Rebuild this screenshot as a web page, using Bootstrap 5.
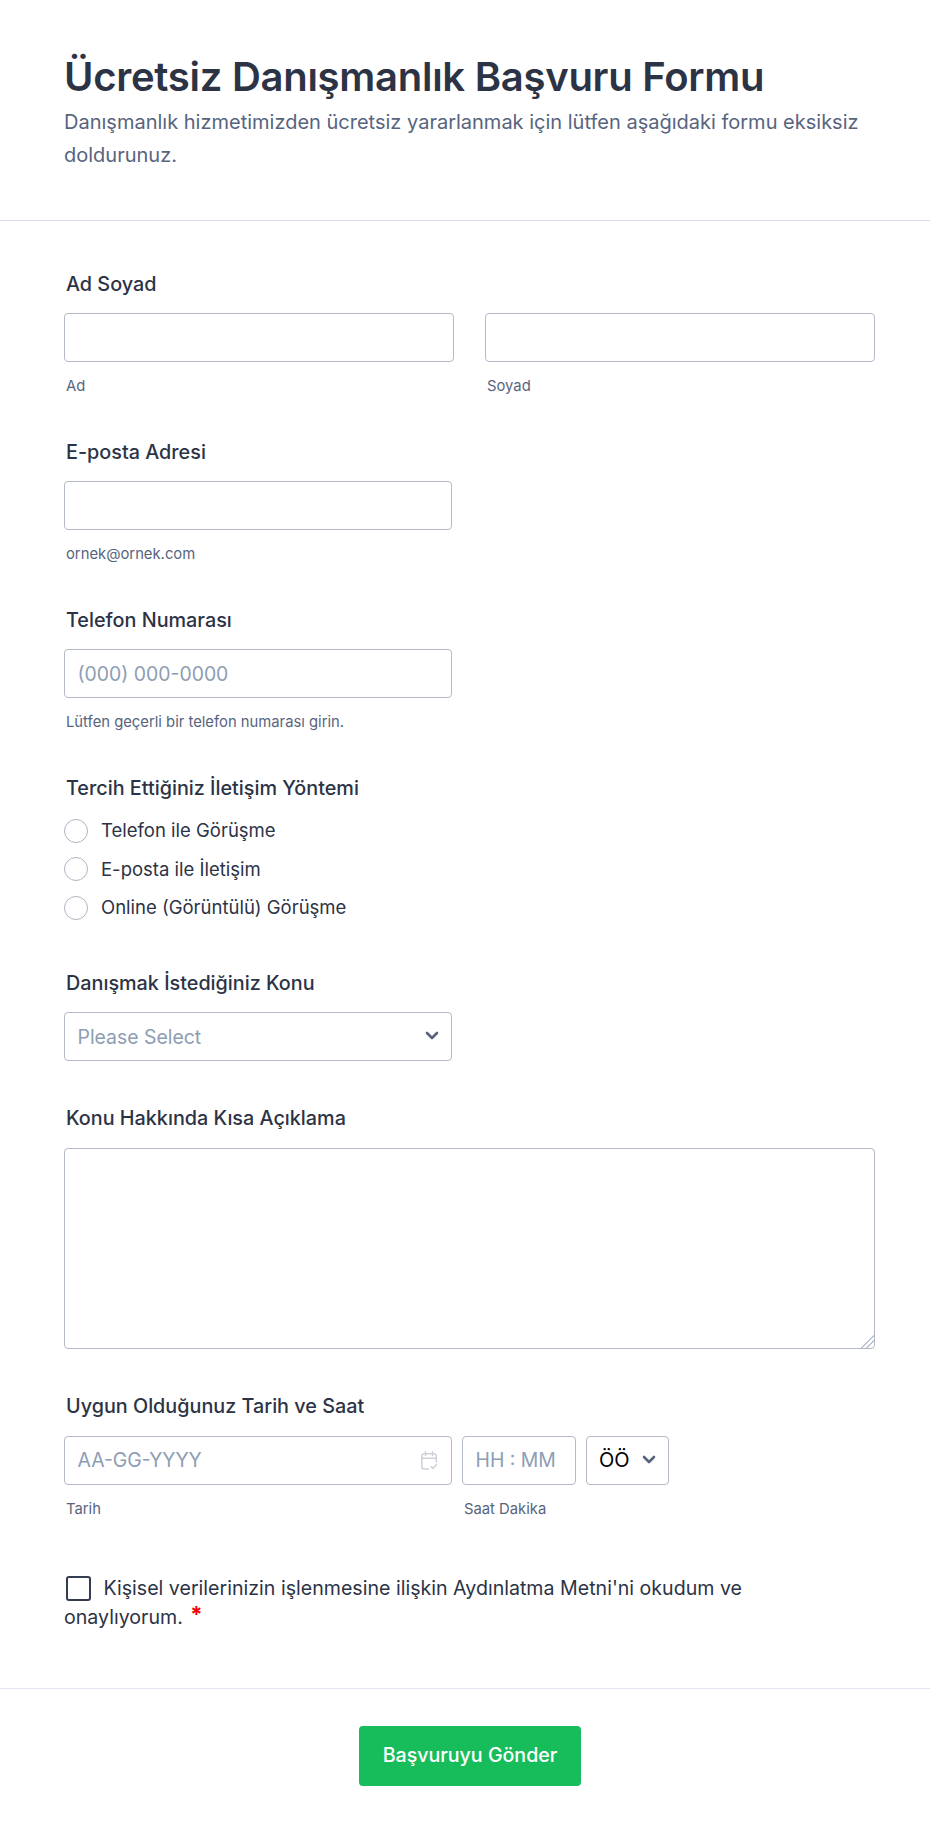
<!DOCTYPE html>
<html lang="tr">
<head>
  <meta charset="UTF-8">
  <meta name="viewport" content="width=device-width, initial-scale=1.0">
  <title>Ücretsiz Danışmanlık Başvuru Formu</title>
  <link href="https://cdn.jsdelivr.net/npm/bootstrap@5.3.3/dist/css/bootstrap.min.css" rel="stylesheet">
  <style>
    body { font-family: Inter, "Noto Sans", sans-serif; color: #2c3345; background: #fff; }
    .form-head { padding: 49px 55px 0 64px; height: 221px; border-bottom: 1px solid #d8dae9; }
    .form-head h1 { font-size: 40px; font-weight: 600; line-height: 56px; margin: 0 0 1px; color: #2c3345; letter-spacing: -.27px; }
    .form-head p { font-size: 20px; line-height: 33px; margin: 0; color: #57647e; }
    .form-body { padding: 47px 55px 0 64px; }
    .field { margin-bottom: 40px; }
    .field-select { margin-bottom: 41px; }
    .field-text { margin-bottom: 41px; }
    .field-label { font-size: 19.8px; font-weight: 500; line-height: 32px; margin: 0 0 13px 2px; color: #2c3345; }
    .label-wide { margin-bottom: 14px; }
    .hint { font-size: 14.8px; line-height: 20px; color: #57647e; margin: 14px 0 0 2px; }
    .form-control, .form-select { height: 49px; border: 1px solid #b4b9c7; border-radius: 4px; font-size: 19.4px; color: #2c3345; box-shadow: none; }
    .form-control { padding: 0 12.5px; }
    .form-control::placeholder { color: #8d9db3; opacity: 1; }
    .half-w { width: 388px; }
    .name-row { display: grid; grid-template-columns: 390px 390px; column-gap: 31px; }
    .radio-row { display: flex; align-items: center; height: 38.3px; font-size: 18.5px; color: #2c3345; }
    .radio-row .form-check-input { width: 24px; height: 24px; margin: 0 13px 0 0; border: 1px solid #aeb4c2; }
    .subject-select { color: #8d9db3; padding: 2px 12.5px 0; background-image: none; }
    .select-wrap { position: relative; }
    .chev { position: absolute; right: 13px; top: 24px; width: 14px; height: 9px; margin-top: -5px; pointer-events: none; }
    textarea.form-control { height: 201px; resize: vertical; }
    textarea.form-control::-webkit-resizer { background: linear-gradient(135deg, transparent 55%, #bcc3d2 55%, #bcc3d2 62%, transparent 62%, transparent 72%, #bcc3d2 72%, #bcc3d2 79%, transparent 79%); }
    .date-row { display: flex; gap: 10px; align-items: flex-start; }
    .date-box { width: 388px; }
    .time-box { width: 114px; }
    .ampm-box { width: 83px; }
    .ampm-box .form-select { padding: 0 12px; color: #000; background-image: none; width: 83px; font-size: 20px; }
    .cal-icon { position: absolute; right: 13px; top: 15px; width: 19px; height: 19px; pointer-events: none; }
    .consent { font-size: 19.6px; line-height: 29px; color: #2c3345; margin-top: 55.5px; }
    .consent .form-check-input { float: none; display: inline-block; width: 25px; height: 25px; margin: 0 7px 0 2px; vertical-align: -6px; border: 2px solid #343c4f; border-radius: 3px; }
    .req { color: #f80000; font-weight: 700; margin-left: 2px; font-size: 22px; line-height: 1; vertical-align: 2px; }
    .form-foot { margin-top: 55.5px; padding: 37px 0 0 10px; border-top: 1px solid #e3e5f0; display: flex; justify-content: center; height: 147px; width: 930px; }
    .send-btn { width: 222px; height: 60px; background: #18bd5b; border: 0; color: #fff; font-size: 19.6px; font-weight: 500; border-radius: 4px; }
    .send-btn:hover { background: #18bd5b; color: #fff; }
  </style>
</head>
<body>
  <form>
    <div class="form-head">
      <h1>Ücretsiz Danışmanlık Başvuru Formu</h1>
      <p>Danışmanlık hizmetimizden ücretsiz yararlanmak için lütfen aşağıdaki formu eksiksiz doldurunuz.</p>
    </div>

    <div class="form-body">
      <div class="field">
        <div class="field-label">Ad Soyad</div>
        <div class="name-row">
          <div><input class="form-control" type="text" aria-label="Ad"><div class="hint">Ad</div></div>
          <div><input class="form-control" type="text" aria-label="Soyad"><div class="hint">Soyad</div></div>
        </div>
      </div>

      <div class="field">
        <div class="field-label">E-posta Adresi</div>
        <input class="form-control half-w" type="email" aria-label="E-posta Adresi">
        <div class="hint">ornek@ornek.com</div>
      </div>

      <div class="field">
        <div class="field-label">Telefon Numarası</div>
        <input class="form-control half-w" type="tel" placeholder="(000) 000-0000" aria-label="Telefon Numarası">
        <div class="hint">Lütfen geçerli bir telefon numarası girin.</div>
      </div>

      <div class="field">
        <div class="field-label mb-2">Tercih Ettiğiniz İletişim Yöntemi</div>
        <label class="radio-row"><input class="form-check-input" type="radio" name="yontem">Telefon ile Görüşme</label>
        <label class="radio-row"><input class="form-check-input" type="radio" name="yontem">E-posta ile İletişim</label>
        <label class="radio-row"><input class="form-check-input" type="radio" name="yontem">Online (Görüntülü) Görüşme</label>
      </div>

      <div class="field-select">
        <div class="field-label">Danışmak İstediğiniz Konu</div>
        <div class="select-wrap half-w">
          <select class="form-select subject-select" aria-label="Danışmak İstediğiniz Konu"><option>Please Select</option></select>
          <svg class="chev" viewBox="0 0 14 9"><path d="M2 2l5 5 5-5" fill="none" stroke="#57647e" stroke-width="2.6" stroke-linecap="round" stroke-linejoin="round"/></svg>
        </div>
      </div>

      <div class="field-text">
        <div class="field-label label-wide">Konu Hakkında Kısa Açıklama</div>
        <textarea class="form-control" aria-label="Konu Hakkında Kısa Açıklama"></textarea>
      </div>

      <div class="field-label label-wide">Uygun Olduğunuz Tarih ve Saat</div>
      <div class="date-row">
        <div class="date-box">
          <div class="select-wrap">
            <input class="form-control" type="text" placeholder="AA-GG-YYYY" aria-label="Tarih">
            <svg class="cal-icon" viewBox="0 0 19 19" fill="none" stroke="#cdd1da" stroke-width="1.5" stroke-linecap="round" stroke-linejoin="round"><path d="M8.5 18H4a2.2 2.2 0 0 1-2.2-2.2V5A2.2 2.2 0 0 1 4 2.8h10A2.2 2.2 0 0 1 16.2 5v6"/><path d="M1.8 7.3h14.4M5.5.8v3.6M12.5.8v3.6"/><path d="M11 15.5l2 2 3.5-4"/></svg>
          </div>
          <div class="hint">Tarih</div>
        </div>
        <div class="time-box">
          <input class="form-control" type="text" placeholder="HH : MM" aria-label="Saat Dakika">
          <div class="hint text-nowrap">Saat Dakika</div>
        </div>
        <div class="ampm-box select-wrap">
          <select class="form-select" aria-label="ÖÖ"><option>ÖÖ</option></select>
          <svg class="chev" viewBox="0 0 14 9"><path d="M2 2l5 5 5-5" fill="none" stroke="#57647e" stroke-width="2.6" stroke-linecap="round" stroke-linejoin="round"/></svg>
        </div>
      </div>

      <div class="consent">
        <input class="form-check-input" type="checkbox" aria-label="Onay"> Kişisel verilerinizin işlenmesine ilişkin Aydınlatma Metni'ni okudum ve<br>onaylıyorum. <span class="req">*</span>
      </div>
    </div>

    <div class="form-foot">
      <button type="button" class="btn send-btn">Başvuruyu Gönder</button>
    </div>
  </form>
  <script src="https://cdn.jsdelivr.net/npm/bootstrap@5.3.3/dist/js/bootstrap.bundle.min.js"></script>
</body>
</html>
